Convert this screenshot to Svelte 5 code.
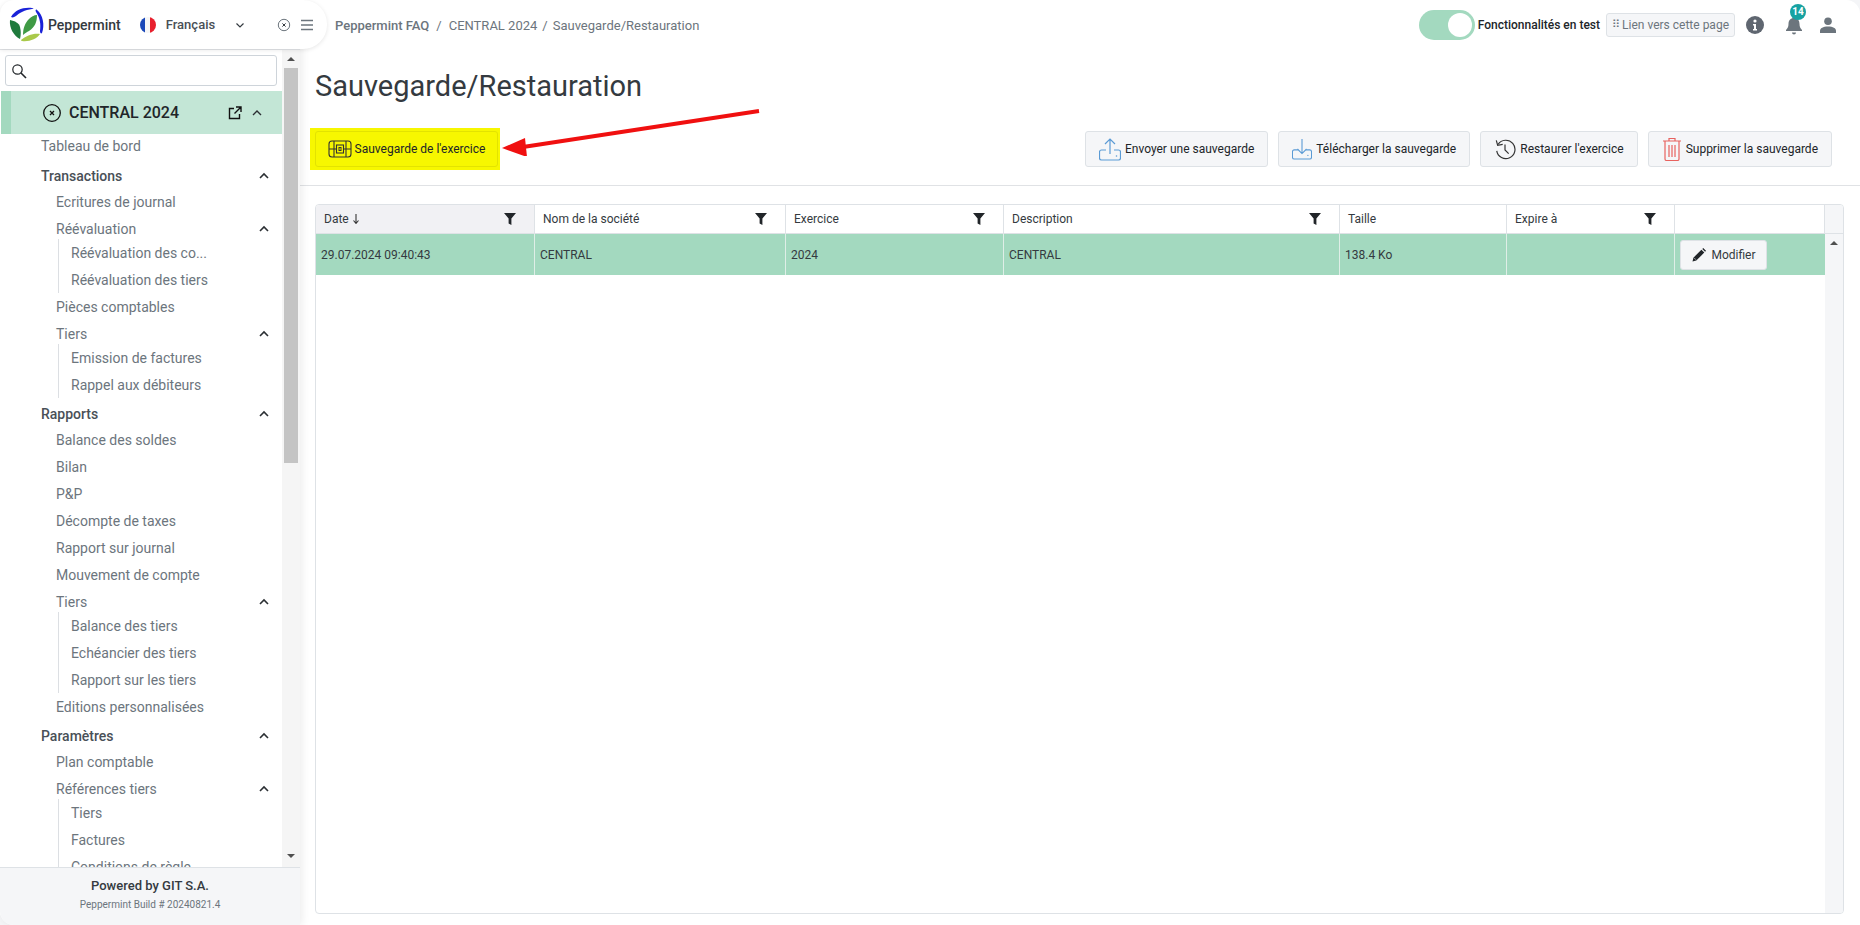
<script>
  const menu = [
    { title: 'Transactions', items: [
      { label: 'Ecritures de journal' },
      { label: 'Réévaluation', open: true, children: ['Réévaluation des co...', 'Réévaluation des tiers'] },
      { label: 'Pièces comptables' },
      { label: 'Tiers', open: true, children: ['Emission de factures', 'Rappel aux débiteurs'] },
    ] },
    { title: 'Rapports', items: [
      { label: 'Balance des soldes' },
      { label: 'Bilan' },
      { label: 'P&P' },
      { label: 'Décompte de taxes' },
      { label: 'Rapport sur journal' },
      { label: 'Mouvement de compte' },
      { label: 'Tiers', open: true, children: ['Balance des tiers', 'Echéancier des tiers', 'Rapport sur les tiers'] },
      { label: 'Editions personnalisées' },
    ] },
    { title: 'Paramètres', items: [
      { label: 'Plan comptable' },
      { label: 'Références tiers', open: true, children: ['Tiers', 'Factures', 'Conditions de règle'] },
    ] },
  ];

  const columns = [
    { label: 'Date', sorted: true, filter: true },
    { label: 'Nom de la société', filter: true },
    { label: 'Exercice', filter: true },
    { label: 'Description', filter: true },
    { label: 'Taille', filter: false },
    { label: 'Expire à', filter: true },
    { label: '', filter: false },
  ];

  const row = ['29.07.2024 09:40:43', 'CENTRAL', '2024', 'CENTRAL', '138.4 Ko', ''];
</script>

{#snippet chevron()}
  <svg class="chev" viewBox="0 0 12 12" width="12" height="12"><path d="M2 8l4-4 4 4" fill="none" stroke="#2b2f33" stroke-width="1.6"/></svg>
{/snippet}

{#snippet funnel()}
  <svg class="funnel" viewBox="0 0 14 14" width="14" height="14"><path d="M1 1h12L8.4 6.6V13L5.6 11.6V6.6z" fill="#212529"/></svg>
{/snippet}

<div class="page">
  <aside class="sidebar">
    <div class="brand">
      <svg class="logo" viewBox="0 0 36 36" width="36" height="36">
        <path d="M2 10C6 3 14 0 23 1c2 0 2 1 0 1C16 3 10 6 7 9c-2 1-3 2-5 1z" fill="#1a22d8"/>
        <path d="M28 3c6 5 8 15 5 23-1 1-2 0-2-2 1-7 0-13-4-19-1-2 0-3 1-2z" fill="#1a22d8"/>
        <path d="M1 13c5 1 9 3 10 7 1 4 1 8 0 12C5 29 0 21 1 13z" fill="#1f7a3d"/>
        <path d="M28 8c0 7-2 12-8 16-2 1-4 2-6 4 0-7 2-12 6-16 2-2 5-4 8-4z" fill="#3f9a45"/>
        <path d="M31 27c-3 5-11 8-18 7-1 0-1-1-1-1 5-4 12-7 19-6z" fill="#a9c94a"/>
      </svg>
      <span class="brand-name">Peppermint</span>
      <span class="flag"><i class="blue"></i><i class="white"></i><i class="red"></i></span>
      <span class="lang">Français</span>
      <svg class="lang-chev" viewBox="0 0 10 10" width="10" height="10"><path d="M1.5 3.5L5 7l3.5-3.5" fill="none" stroke="#343a40" stroke-width="1.2"/></svg>
      <svg class="brand-close" viewBox="0 0 14 14" width="14" height="14"><circle cx="7" cy="7" r="5.7" fill="none" stroke="#6c757d"/><path d="M5.4 5.4l3.2 3.2M8.6 5.4l-3.2 3.2" stroke="#343a40"/></svg>
      <svg class="burger" viewBox="0 0 12 12" width="12" height="12"><path d="M0 1.5h12M0 6h12M0 10.5h12" stroke="#6c757d" stroke-width="1.4"/></svg>
    </div>

    <div class="side-body">
      <div class="side-scroll">
        <div class="search">
          <svg viewBox="0 0 16 16" width="16" height="16"><circle cx="6.5" cy="6.5" r="4.7" fill="none" stroke="#212529" stroke-width="1.2"/><path d="M10 10l5 5" stroke="#212529" stroke-width="1.6"/></svg>
        </div>

        <div class="company">
          <svg class="co-close" viewBox="0 0 20 20" width="20" height="20"><circle cx="10" cy="10" r="8.3" fill="none" stroke="#111" stroke-width="1.3"/><path d="M8 8l4 4M12 8l-4 4" stroke="#111" stroke-width="1.3"/></svg>
          <span class="co-name">CENTRAL 2024</span>
          <svg class="co-ext" viewBox="0 0 14 14" width="14" height="14"><path d="M6 2.5H1.5v10h10V8M8 1h5v5M13 1L6.5 7.5" fill="none" stroke="#111" stroke-width="1.4"/></svg>
          <svg class="co-chev" viewBox="0 0 12 12" width="12" height="12"><path d="M2 8l4-4 4 4" fill="none" stroke="#2b2f33" stroke-width="1.4"/></svg>
        </div>

        <div class="menu">
          <div class="item top">Tableau de bord</div>
          {#each menu as group}
            <div class="group-title">{group.title}{@render chevron()}</div>
            {#each group.items as item}
              <div class="item">{item.label}{#if item.open}{@render chevron()}{/if}</div>
              {#if item.children}
                <div class="children">
                  {#each item.children as child}
                    <div class="child">{child}</div>
                  {/each}
                </div>
              {/if}
            {/each}
          {/each}
        </div>
      </div>

      <div class="scrollbar">
        <span class="arrow up"></span>
        <div class="thumb"></div>
        <span class="arrow down"></span>
      </div>
    </div>

    <footer class="side-foot">
      <div class="powered">Powered by GIT S.A.</div>
      <div class="build">Peppermint Build # 20240821.4</div>
    </footer>
  </aside>

  <main class="main">
    <header class="topbar">
      <nav class="crumbs">
        <b>Peppermint FAQ</b><span>/</span>CENTRAL 2024<span>/</span>Sauvegarde/Restauration
      </nav>
      <div class="top-right">
        <div class="toggle"><i></i></div>
        <span class="toggle-label">Fonctionnalités en test</span>
        <div class="link-btn"><span class="grip">⠿</span>Lien vers cette page</div>
        <svg class="info" viewBox="0 0 18 18" width="18" height="18"><circle cx="9" cy="9" r="9" fill="#5f6670"/><circle cx="9" cy="5" r="1.6" fill="#fff"/><path d="M7 8h3v5h1v1.4H7V13h1V9.4H7z" fill="#fff"/></svg>
        <div class="bell">
          <svg viewBox="0 0 18 20" width="18" height="20"><path d="M9 2c3.500 0 5.500 2.500 5.500 6 0 3 1 4.500 2.500 6v1H1v-1c1.500-1.500 2.500-3 2.500-6C3.500 4.500 5.500 2 9 2zM7 16.500h4a2 2 0 0 1-4 0z" fill="#6c757d"/></svg>
          <span class="badge">14</span>
        </div>
        <svg class="user" viewBox="0 0 16 16" width="16" height="16"><circle cx="8" cy="4.300" r="3.800" fill="#6c757d"/><path d="M0 16v-2c0-3 3-4.500 8-4.500s8 1.500 8 4.500v2z" fill="#6c757d"/></svg>
      </div>
    </header>

    <h1>Sauvegarde/Restauration</h1>

    <div class="toolbar">
      <div class="highlight">
        <button class="btn">
          <svg viewBox="0 0 24 18" width="24" height="18"><rect x="1" y="1" width="22" height="16" rx="3" fill="none" stroke="#333" stroke-width="1.1"/><path d="M6 1v16M18 1v16M1 9h7M16 9h7" stroke="#333" stroke-width="1.1" fill="none"/><rect x="8.500" y="5" width="7" height="8" fill="none" stroke="#333" stroke-width="1.1"/><rect x="11" y="7.500" width="2" height="3" fill="none" stroke="#333"/></svg>
          Sauvegarde de l'exercice
        </button>
      </div>
      <div class="actions">
        <button class="btn">
          <svg viewBox="0 0 22 24" width="22" height="24"><path d="M7 13H2.500a2 2 0 0 0-2 2v6a2 2 0 0 0 2 2h17a2 2 0 0 0 2-2v-6a2 2 0 0 0-2-2H15M11 17V2M6 7l5-5 5 5" fill="none" stroke="#5b9bd5" stroke-width="1.200"/><circle cx="17.500" cy="19" r=".8" fill="#5b9bd5"/></svg>
          Envoyer une sauvegarde
        </button>
        <button class="btn">
          <svg viewBox="0 0 22 24" width="20" height="24"><path d="M7 13H2.500a2 2 0 0 0-2 2v6a2 2 0 0 0 2 2h17a2 2 0 0 0 2-2v-6a2 2 0 0 0-2-2H15M11 1v16M6 12l5 5 5-5" fill="none" stroke="#5b9bd5" stroke-width="1.200"/><circle cx="17.500" cy="19" r=".8" fill="#5b9bd5"/></svg>
          Télécharger la sauvegarde
        </button>
        <button class="btn">
          <svg viewBox="0 0 24 24" width="22" height="24"><path d="M4.500 7A10 10 0 1 1 3 14" fill="none" stroke="#333" stroke-width="1.300"/><path d="M2.500 2.500l1.500 5.500 5.500-1" fill="none" stroke="#333" stroke-width="1.300"/><path d="M12 7v6l4 4" fill="none" stroke="#333" stroke-width="1.300"/></svg>
          Restaurer l'exercice
        </button>
        <button class="btn">
          <svg viewBox="0 0 20 24" width="20" height="24"><path d="M1 4h18M7 4V1.500h6V4M3 4v18a1.500 1.500 0 0 0 1.500 1.500h11A1.500 1.500 0 0 0 17 22V4M7 8v12M10 8v12M13 8v12" fill="none" stroke="#e8625f" stroke-width="1.200"/></svg>
          Supprimer la sauvegarde
        </button>
      </div>
    </div>

    <section class="content">
      <div class="grid">
        <div class="grid-main">
          <div class="grid-row head">
            {#each columns as col}
              <div class="th" class:sorted={col.sorted}>
                <span>{col.label}{#if col.sorted}<svg class="sort" viewBox="0 0 8 12" width="8" height="12"><path d="M4 1v9M1.500 7.500L4 10.500l2.500-3" fill="none" stroke="#333" stroke-width="1.100"/></svg>{/if}</span>
                {#if col.filter}{@render funnel()}{/if}
              </div>
            {/each}
          </div>
          <div class="grid-row body">
            {#each row as value}
              <div class="td">{value}</div>
            {/each}
            <div class="td">
              <button class="edit">
                <svg viewBox="0 0 16 16" width="16" height="16"><path d="M1.500 14.500l.9-3.800 8-8 2.900 2.900-8 8zM11.300 1.900l.9-.9 2.800 2.800-.9.900z" fill="#212529"/><path d="M3.400 11.200l1.400 1.400" stroke="#f5f6f8" stroke-width=".7"/></svg>
                Modifier
              </button>
            </div>
          </div>
        </div>
        <div class="grid-scroll">
          <div class="corner"></div>
          <span class="arrow up"></span>
        </div>
      </div>
    </section>

    <svg class="annotation" viewBox="0 0 270 50" width="270" height="50">
      <path d="M258 5L22 41" stroke="#f01010" stroke-width="4" fill="none"/>
      <path d="M1 42L24 32l2 19z" fill="#f01010"/>
    </svg>
  </main>
</div>

<style>
  :global(body) {
    margin: 0;
    background: #f4f5f7;
    font-family: Roboto, "Liberation Sans", sans-serif;
    color: #343a40;
  }

  .page {
    display: flex;
    height: 925px;
    overflow: hidden;
  }

  /* sidebar */
  .sidebar {
    width: 300px;
    flex: none;
    display: flex;
    flex-direction: column;
    background: #fff;
    border-radius: 0 0 0 14px;
    box-shadow: 2px 0 8px rgba(0, 0, 0, 0.08);
    position: relative;
    z-index: 2;
  }

  .brand {
    width: 327px;
    height: 49px;
    flex: none;
    box-sizing: border-box;
    display: flex;
    align-items: center;
    background: #fff;
    border-radius: 14px 24px 24px 0;
    box-shadow: 0 1px 4px rgba(0, 0, 0, 0.1);
    z-index: 3;
  }

  .logo { margin-left: 9px; }

  .brand-name {
    margin-left: 3px;
    font-size: 14px;
    font-weight: 500;
    color: #343a40;
  }

  .flag {
    display: flex;
    width: 16px;
    height: 16px;
    margin-left: 19px;
    border-radius: 50%;
    overflow: hidden;
  }
  .flag i { flex: 1; }
  .flag .blue { background: #1a47b8; }
  .flag .white { background: #f6f6f6; }
  .flag .red { background: #e8202e; }

  .lang {
    margin-left: 10px;
    font-size: 13px;
    font-weight: 500;
    color: #495057;
  }

  .lang-chev { margin-left: 20px; }
  .brand-close { margin-left: 32px; }
  .burger { margin-left: 10px; }

  .side-body {
    flex: 1;
    min-height: 0;
    display: flex;
    border-top: 1px solid #e3e5e8;
  }

  .side-scroll {
    flex: 1;
    min-width: 0;
    overflow: hidden;
  }

  .search {
    height: 31px;
    box-sizing: border-box;
    margin: 5px;
    display: flex;
    align-items: center;
    padding-left: 5px;
    border: 1px solid #ced4da;
    border-radius: 3px;
  }

  .company {
    height: 43px;
    margin-left: 1px;
    display: flex;
    align-items: center;
    background: #c3e6d6;
    border-left: 10px solid #a3d9bf;
  }

  .co-close { margin-left: 31px; }

  .co-name {
    margin-left: 7px;
    font-size: 16px;
    font-weight: 500;
    color: #212529;
  }

  .co-ext { margin-left: 49px; }
  .co-chev { margin-left: 9px; }

  .menu { margin-top: -2px; }

  .item,
  .group-title,
  .child {
    display: flex;
    align-items: center;
    justify-content: space-between;
    font-size: 14px;
    color: #6c757d;
    white-space: nowrap;
  }

  .item {
    height: 27px;
    padding: 0 12px 0 56px;
  }

  .item.top {
    padding-left: 41px;
    margin-bottom: 3px;
  }

  .group-title {
    height: 26px;
    box-sizing: border-box;
    margin-top: 2px;
    padding: 2px 12px 0 41px;
    font-weight: 500;
    color: #495057;
  }

  .children {
    margin: -3px 0 0 58px;
    border-left: 1px solid #dcdfe3;
  }

  .child {
    height: 27px;
    padding-left: 12px;
  }

  .chev { flex: none; }

  .scrollbar {
    width: 18px;
    flex: none;
    display: flex;
    flex-direction: column;
    align-items: center;
    background: #f5f5f5;
    padding-top: 7px;
  }

  .thumb {
    width: 14px;
    height: 395px;
    margin-top: 7px;
    background: #c4c4c4;
  }

  .arrow {
    display: block;
    width: 0;
    height: 0;
    border-left: 4px solid transparent;
    border-right: 4px solid transparent;
  }
  .arrow.up { border-bottom: 4px solid #505050; }
  .arrow.down {
    border-top: 4px solid #505050;
    margin-top: auto;
    margin-bottom: 9px;
  }

  .side-foot {
    height: 58px;
    flex: none;
    box-sizing: border-box;
    background: #f5f6f8;
    border-top: 1px solid #dee2e6;
    border-radius: 0 0 0 14px;
    text-align: center;
    padding-top: 10px;
  }

  .powered {
    font-size: 13px;
    font-weight: 500;
    color: #343a40;
  }

  .build {
    margin-top: 6px;
    font-size: 10px;
    color: #6c757d;
  }

  /* main */
  .main {
    flex: 1;
    min-width: 0;
    display: flex;
    flex-direction: column;
    background: #fff;
    border-radius: 0 14px 0 0;
    position: relative;
  }

  .topbar {
    height: 49px;
    flex: none;
    display: flex;
    align-items: center;
    justify-content: space-between;
    padding-left: 35px;
  }

  .crumbs {
    font-size: 13px;
    color: #6c757d;
    margin-top: 1px;
  }
  .crumbs b { font-weight: 500; }
  .crumbs span { margin: 0 7px; }
  .crumbs span:last-of-type { margin: 0 5px; }

  .top-right {
    display: flex;
    align-items: center;
    margin-right: 24px;
  }

  .toggle {
    width: 56px;
    height: 30px;
    box-sizing: border-box;
    padding: 3px;
    display: flex;
    justify-content: flex-end;
    background: #a3d9bf;
    border-radius: 15px;
  }
  .toggle i {
    width: 24px;
    height: 24px;
    background: #fff;
    border-radius: 50%;
  }

  .toggle-label {
    margin-left: 3px;
    font-size: 12px;
    font-weight: 500;
    color: #212529;
  }

  .link-btn {
    display: flex;
    align-items: center;
    height: 24px;
    box-sizing: border-box;
    margin-left: 6px;
    padding: 0 5px;
    font-size: 12px;
    color: #6c757d;
    background: #f5f6f8;
    border: 1px solid #dee2e6;
    border-radius: 3px;
  }
  .grip {
    font-family: "DejaVu Sans", sans-serif;
    font-size: 11px;
    margin-right: 2px;
  }

  .info { margin-left: 11px; }

  .bell {
    position: relative;
    display: flex;
    margin: 2px 0 0 21px;
  }

  .badge {
    position: absolute;
    top: -12px;
    left: 5px;
    width: 16px;
    height: 16px;
    border-radius: 50%;
    background: #17a2a2;
    color: #fff;
    font-size: 10px;
    font-weight: 700;
    line-height: 16px;
    text-align: center;
  }

  .user { margin-left: 17px; }

  h1 {
    margin: 17px 0 0 15px;
    height: 41px;
    font-size: 29px;
    font-weight: 400;
    line-height: 41px;
    color: #343a40;
  }

  .toolbar {
    height: 57px;
    flex: none;
    box-sizing: border-box;
    margin-top: 22px;
    padding: 0 28px 0 10px;
    display: flex;
    align-items: flex-start;
    justify-content: space-between;
    border-bottom: 1px solid #e0e2e5;
  }

  .highlight {
    margin-top: -1px;
    padding: 3px 2px 3px 5px;
    background: #f7f700;
  }

  .highlight .btn {
    height: 36px;
    width: 183px;
    gap: 3px;
    padding: 0;
    background: #f7f700;
    border-color: #e3e300;
    justify-content: center;
  }

  .actions {
    display: flex;
    gap: 10px;
    margin-top: 2px;
  }

  .btn {
    height: 36px;
    display: flex;
    align-items: center;
    gap: 4px;
    padding: 0 13px;
    font: 12px Roboto, "Liberation Sans", sans-serif;
    color: #212529;
    white-space: nowrap;
    background: #f5f6f8;
    border: 1px solid #dee2e6;
    border-radius: 3px;
  }

  .content {
    flex: 1;
    min-height: 0;
    padding: 18px 16px 11px 15px;
  }

  .grid {
    height: 100%;
    box-sizing: border-box;
    display: flex;
    border: 1px solid #dee2e6;
    border-radius: 4px;
    overflow: hidden;
  }

  .grid-main {
    flex: 1;
    min-width: 0;
  }

  .grid-row {
    display: grid;
    grid-template-columns: 219px 251px 218px 336px 167px 168px 1fr;
  }

  .th {
    height: 29px;
    box-sizing: border-box;
    display: flex;
    align-items: center;
    justify-content: space-between;
    padding: 0 17px 0 8px;
    font-size: 12px;
    color: #343a40;
    border-right: 1px solid #dee2e6;
    border-bottom: 1px solid #dee2e6;
  }

  .th.sorted { background: #f1f1f4; }

  .sort {
    margin-left: 3px;
    vertical-align: -2px;
  }

  .td {
    height: 41px;
    box-sizing: border-box;
    display: flex;
    align-items: center;
    padding: 0 5px;
    font-size: 12px;
    color: #343a40;
    background: #a3d9bf;
    border-right: 1px solid #dfeee7;
  }

  .td:last-child { border-right: 0; }

  .edit {
    height: 30px;
    width: 87px;
    display: flex;
    align-items: center;
    justify-content: center;
    gap: 4px;
    padding: 0;
    font: 12px Roboto, "Liberation Sans", sans-serif;
    color: #343a40;
    background: #f5f6f8;
    border: 1px solid #dee2e6;
    border-radius: 3px;
  }

  .grid-scroll {
    width: 18px;
    flex: none;
    display: flex;
    flex-direction: column;
    align-items: center;
    background: #f5f6f8;
  }

  .corner {
    width: 100%;
    height: 29px;
    margin-bottom: 7px;
    box-sizing: border-box;
    border-bottom: 1px solid #dee2e6;
  }

  .annotation {
    position: absolute;
    left: 201px;
    top: 106px;
    pointer-events: none;
  }
</style>
